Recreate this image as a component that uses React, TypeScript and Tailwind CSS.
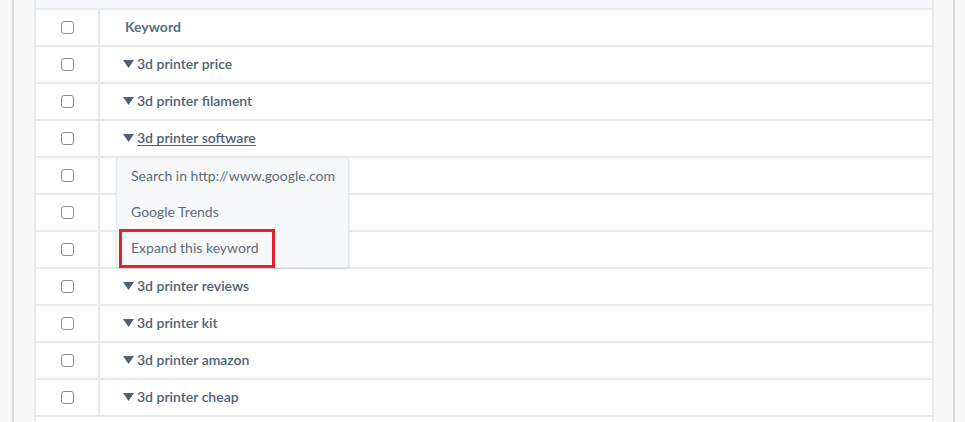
import React from "react";

const keywords = [
  "3d printer price",
  "3d printer filament",
  "3d printer software",
  "",
  "",
  "",
  "3d printer reviews",
  "3d printer kit",
  "3d printer amazon",
  "3d printer cheap",
];

const Checkbox = () => (
  <span className="block w-[13px] h-[13px] rounded-[3px] border border-[#8e8e8e] bg-white" />
);

const Triangle = () => (
  <svg width="11" height="8" viewBox="0 0 11 8" className="mr-[3px] shrink-0">
    <path d="M0 0 L11 0 L5.5 8 Z" fill="#4b6177" />
  </svg>
);

const Row = ({ text, underline }: { text: string; underline?: boolean }) => (
  <div className="flex h-[37px] border-b-2 border-[#e7eaed]">
    <div className="w-[64px] flex items-center justify-center border-r-2 border-[#e7eaed]">
      <Checkbox />
    </div>
    <div className="flex-1 flex items-center pl-[23px] pb-[2px]">
      {text && (
        <span className={`flex items-center text-[14px] font-semibold text-[#4d6275] ${underline ? "underline underline-offset-2" : ""}`}>
          <Triangle />
          {text}
        </span>
      )}
    </div>
  </div>
);

export default function App() {
  return (
    <div
      className="w-[965px] h-[422px] overflow-hidden flex bg-[#f8f8f8]"
      style={{ fontFamily: "Lato, 'Open Sans', sans-serif" }}
    >
      <div className="w-[12px]" />
      <div className="w-[2px] bg-[#d9d9d9]" />
      <div className="w-[20px]" />
      {/* table */}
      <div className="relative w-[900px] bg-white border-x-2 border-[#e6ebf0]">
        <div className="h-[8px] bg-[#f5f7fa] border-b-2 border-[#e7eaed] box-content" />
        <div className="flex h-[35px] border-b-2 border-[#e7eaed] box-content">
          <div className="w-[64px] flex items-center justify-center border-r-2 border-[#e7eaed]">
            <Checkbox />
          </div>
          <div className="flex-1 flex items-center pl-[25px] pb-[2px] text-[14px] font-bold text-[#5a6e7f]">
            Keyword
          </div>
        </div>
        {keywords.map((k, i) => (
          <Row key={i} text={k} underline={i === 2} />
        ))}

        {/* context menu */}
        <div className="absolute left-[80px] top-[157px] w-[233px] h-[111px] bg-[#f7f8fa] border border-[#e4e7ea] rounded-[3px] text-[14px] text-[#5c6c79] shadow-sm">
          <div className="h-[36px] flex items-center pl-[14px] pb-[2px]">Search in http://www.google.com</div>
          <div className="h-[36px] flex items-center pl-[14px] pb-[2px]">Google Trends</div>
          <div className="h-[36px] flex items-center pl-[14px] pb-[2px]">Expand this keyword</div>
        </div>
        <div className="absolute left-[83px] top-[229px] w-[156px] h-[39px] border-[3px] border-[#e0222b]" />
      </div>
      <div className="w-[19px]" />
      <div className="w-[2px] bg-[#d9d9d9]" />
      <div className="flex-1" />
    </div>
  );
}
